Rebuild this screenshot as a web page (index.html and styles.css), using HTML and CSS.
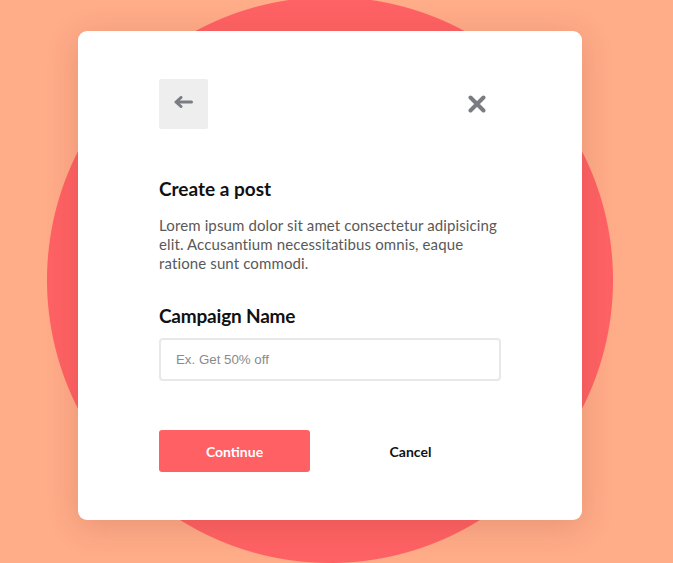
FILE: index.html
```html
<!DOCTYPE html>
<html lang="en">
<head>
<meta charset="utf-8">
<title>Create a post</title>
<link rel="stylesheet" href="styles.css">
</head>
<body>
<div class="stage">
  <div class="card">
    <div class="card-head">
      <button class="back-btn" aria-label="Back">
        <svg width="19" height="12" viewBox="0 0 19 12" fill="none" stroke="#7b7c81" stroke-width="3" stroke-linecap="round" stroke-linejoin="round"><path d="M2 6H17.5M7 1.5L2 6L7 10.5"/></svg>
      </button>
      <button class="close-btn" aria-label="Close">
        <svg width="18" height="18" viewBox="0 0 18 18" fill="none" stroke="#7b7c81" stroke-width="4" stroke-linecap="round"><path d="M2.5 2.5L15.5 15.5M15.5 2.5L2.5 15.5"/></svg>
      </button>
    </div>
    <h2 class="title">Create a post</h2>
    <p class="desc">Lorem ipsum dolor sit amet consectetur adipisicing elit. Accusantium necessitatibus omnis, eaque ratione sunt commodi.</p>
    <label class="label" for="campaign">Campaign Name</label>
    <input class="field" id="campaign" type="text" placeholder="Ex. Get 50% off">
    <div class="actions">
      <button class="btn btn-primary">Continue</button>
      <button class="btn btn-plain">Cancel</button>
    </div>
  </div>
</div>
</body>
</html>
```

FILE: styles.css
```css
* { box-sizing: border-box; }
html, body { margin: 0; padding: 0; }
body {
  width: 673px;
  height: 563px;
  overflow: hidden;
  font-family: Lato, "Noto Sans", sans-serif;
  background: radial-gradient(circle 283px at 330px 280px, #ff6264 282.5px, #ffac89 283.5px);
}
.stage {
  padding: 31px 0 0 78px;
}
.card {
  width: 504px;
  height: 489px;
  background: #fff;
  border-radius: 9px;
  padding: 48px 81px;
  box-shadow: 0 6px 32px rgba(120, 40, 20, 0.18);
  display: flex;
  flex-direction: column;
}
.card-head {
  display: flex;
  justify-content: space-between;
  align-items: center;
  height: 50px;
}
.back-btn {
  width: 49px;
  height: 50px;
  border: 0;
  padding: 0 0 5px 0;
  background: #eeeeef;
  border-radius: 2px;
  display: flex;
  align-items: center;
  justify-content: center;
}
.close-btn {
  width: 48px;
  height: 50px;
  border: 0;
  padding: 0;
  background: transparent;
  display: flex;
  align-items: center;
  justify-content: center;
}
.title {
  margin: 48px 0 0;
  font-size: 19px;
  line-height: 24px;
  font-weight: 700;
  color: #111;
}
.desc {
  margin: 15px 0 0;
  font-size: 15px;
  line-height: 19px;
  letter-spacing: 0.12px;
  color: #595959;
}
.label {
  margin-top: 31px;
  font-size: 19px;
  line-height: 24px;
  font-weight: 700;
  letter-spacing: -0.2px;
  color: #111;
}
.field {
  margin-top: 10px;
  width: 342px;
  height: 43px;
  border: 2px solid #e8e8e8;
  border-radius: 4px;
  padding: 0 15px;
  font-family: "Liberation Sans", Arial, sans-serif;
  font-size: 13.3px;
  color: #333;
  outline: none;
}
.field::placeholder { color: #8a8a8a; }
.actions {
  margin-top: 49px;
  display: flex;
  gap: 25px;
}
.btn {
  width: 151px;
  height: 42px;
  border: 0;
  border-radius: 3px;
  font-family: Lato, "Noto Sans", sans-serif;
  font-size: 14px;
  font-weight: 700;
  padding: 0;
}
.btn-primary {
  background: #ff6064;
  color: #fff;
}
.btn-plain {
  background: transparent;
  color: #111;
}
```
